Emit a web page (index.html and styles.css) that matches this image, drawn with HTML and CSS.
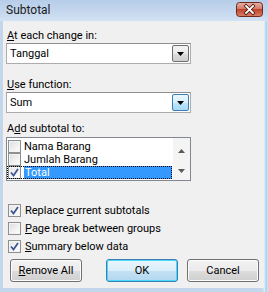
FILE: index.html
```html
<!DOCTYPE html>
<html>
<head>
<meta charset="utf-8">
<link rel="stylesheet" href="styles.css">
</head>
<body>
<div class="window">
  <div class="titlebar">
    <span class="title">Subtotal</span>
    <span class="close">
      <svg width="27" height="15" viewBox="0 0 27 15">
        <defs>
          <linearGradient id="cg" x1="0" y1="0" x2="0" y2="1">
            <stop offset="0" stop-color="#e9b4a8"/>
            <stop offset="0.45" stop-color="#d27a66"/>
            <stop offset="0.5" stop-color="#c1442c"/>
            <stop offset="1" stop-color="#d9826a"/>
          </linearGradient>
        </defs>
        <rect x="0.5" y="0.5" width="26" height="14" rx="3" fill="url(#cg)" stroke="#6e2a1c"/>
        <path d="M10 4 L17 11 M17 4 L10 11" stroke="#4a1a12" stroke-width="3.4" stroke-linecap="square"/>
        <path d="M10 4 L17 11 M17 4 L10 11" stroke="#ffffff" stroke-width="1.8" stroke-linecap="square"/>
      </svg>
    </span>
  </div>
  <div class="body">
    <div class="label l1"><u>A</u>t each change in:</div>
    <div class="combo">
      <span class="value">Tanggal</span>
      <span class="drop"><svg width="7" height="4" viewBox="0 0 7 4"><path d="M0 0 H7 L3.5 4 Z" fill="#000"/></svg></span>
    </div>
    <div class="label l2"><u>U</u>se function:</div>
    <div class="combo hot">
      <span class="value">Sum</span>
      <span class="drop"><svg width="7" height="4" viewBox="0 0 7 4"><path d="M0 0 H7 L3.5 4 Z" fill="#000"/></svg></span>
    </div>
    <div class="label l3">A<u>d</u>d subtotal to:</div>
    <div class="list">
      <div class="items">
        <div class="item"><span class="cb"></span><span class="txt">Nama Barang</span></div>
        <div class="item"><span class="cb"></span><span class="txt">Jumlah Barang</span></div>
        <div class="item sel"><span class="cb on"><svg width="9" height="9" viewBox="0 0 9 9"><path d="M1 4.5 L3.5 7.5 L8 1" fill="none" stroke="#3f5694" stroke-width="1.8"/></svg></span><span class="txt">Total</span></div>
      </div>
      <div class="scroll">
        <svg width="7" height="4" viewBox="0 0 7 4"><path d="M0 4 H7 L3.5 0 Z" fill="#5a5a5a"/></svg>
        <svg width="7" height="4" viewBox="0 0 7 4"><path d="M0 0 H7 L3.5 4 Z" fill="#5a5a5a"/></svg>
      </div>
    </div>
    <div class="checks">
      <div class="check"><span class="cb on"><svg width="9" height="9" viewBox="0 0 9 9"><path d="M1 4.5 L3.5 7.5 L8 1" fill="none" stroke="#3f5694" stroke-width="1.8"/></svg></span><span>Replace <u>c</u>urrent subtotals</span></div>
      <div class="check"><span class="cb"></span><span><u>P</u>age break between groups</span></div>
      <div class="check"><span class="cb on"><svg width="9" height="9" viewBox="0 0 9 9"><path d="M1 4.5 L3.5 7.5 L8 1" fill="none" stroke="#3f5694" stroke-width="1.8"/></svg></span><span><u>S</u>ummary below data</span></div>
    </div>
    <div class="buttons">
      <span class="btn remove"><u>R</u>emove All</span>
      <span class="btn ok">OK</span>
      <span class="btn cancel">Cancel</span>
    </div>
  </div>
</div>
</body>
</html>
```
FILE: styles.css
```css
html, body {
  margin: 0;
  padding: 0;
}
body {
  font-family: Roboto, "Noto Sans", sans-serif;
  font-size: 11px;
  color: #000;
}
u { text-decoration: underline; text-underline-offset: 1px; }
.window {
  width: 268px;
  height: 292px;
  display: flex;
  flex-direction: column;
  background: linear-gradient(90deg, #c3d6ec 0, #c3d6ec 262px, #d8e6f4 264px, #e4eef8 265px, #7fd0ef 266px, #cfe0f2 267px);
}
.titlebar {
  height: 21px;
  display: flex;
  align-items: center;
  justify-content: space-between;
  padding: 0 5px 0 6px;
  background: linear-gradient(180deg, #b6cde9 0%, #c6d8ee 60%, #d3e2f3 100%);
}
.title {
  font-size: 12px;
  color: #1b1b1b;
  line-height: 15px;
}
.close {
  display: flex;
  height: 15px;
  margin-top: -3px;
}
.body {
  flex: 1;
  margin: 0 4px 4px 3px;
  background: #f0f0f0;
  padding: 0 0 0 3px;
  display: flex;
  flex-direction: column;
}
.label {
  height: 15px;
  line-height: 15px;
  padding-left: 1px;
}
.l1 { margin-top: 7px; }
.l2 { margin-top: 13px; }
.l3 { margin-top: 8px; }
.combo {
  width: 185px;
  height: 21px;
  box-sizing: border-box;
  border: 1px solid #acacac;
  border-top-color: #8e8f8f;
  background: #fff;
  display: flex;
  align-items: stretch;
  justify-content: space-between;
}
.combo .value {
  line-height: 19px;
  padding-left: 3px;
}
.combo .drop {
  width: 17px;
  margin: 1px;
  box-sizing: border-box;
  border: 1px solid #707070;
  border-radius: 2px;
  background: linear-gradient(180deg, #f2f2f2 0%, #ebebeb 50%, #dddddd 51%, #cfcfcf 100%);
  display: flex;
  align-items: center;
  justify-content: center;
}
.combo.hot .drop {
  border-color: #3c7fb1;
  background: linear-gradient(180deg, #eaf6fd 0%, #d9f0fc 50%, #bee6fd 51%, #a7d9f5 100%);
}
.list {
  margin-top: 1px;
  width: 185px;
  height: 44px;
  box-sizing: border-box;
  border: 1px solid #828790;
  background: #fff;
  display: flex;
}
.items {
  flex: 1;
  padding-top: 2px;
}
.item {
  height: 13px;
  display: flex;
  align-items: center;
}
.item .txt {
  display: block;
  height: 13px;
  line-height: 13px;
}
.item .cb {
  margin-left: 1px;
  margin-right: 3px;
}
.item.sel {
  outline: 1px dotted #000;
  outline-offset: -1px;
  width: 165px;
}
.item.sel .txt {
  flex: 1;
  background: #3399ff;
  color: #fff;
  padding-left: 1px;
}
.scroll {
  width: 17px;
  background: #f4f4f4;
  display: flex;
  flex-direction: column;
  align-items: center;
  justify-content: space-between;
  padding: 11px 0 7px;
  box-sizing: border-box;
}
.cb {
  width: 13px;
  height: 13px;
  box-sizing: border-box;
  border: 1px solid #8e8f8f;
  background: linear-gradient(135deg, #dcdcdc 0%, #f2f2f2 60%, #ffffff 100%);
  box-shadow: inset 0 0 0 1px #f4f4f4;
  display: inline-flex;
  align-items: center;
  justify-content: center;
  flex: none;
}
.cb.on {
  background: linear-gradient(135deg, #e3e3e3 0%, #f6f6f6 60%, #ffffff 100%);
}
.checks {
  margin-top: 20px;
  display: flex;
  flex-direction: column;
}
.check {
  height: 18px;
  display: flex;
  align-items: center;
  padding-left: 2px;
}
.check .cb { margin-right: 4px; }
.buttons {
  margin-top: 4px;
  display: flex;
  padding-left: 4px;
}
.btn {
  width: 72px;
  height: 23px;
  box-sizing: border-box;
  border: 1px solid #707070;
  border-radius: 3px;
  background: linear-gradient(180deg, #f2f2f2 0%, #ebebeb 50%, #dddddd 51%, #cfcfcf 100%);
  box-shadow: inset 0 0 0 1px #fcfcfc;
  display: flex;
  align-items: center;
  justify-content: center;
}
.btn.ok {
  margin-left: 24px;
  border-color: #3c7fb1;
  box-shadow: inset 0 0 0 1px #48d8fb;
  background: linear-gradient(180deg, #eaf6fd 0%, #dbeef9 50%, #c4e1f4 51%, #b3d8f1 100%);
}
.btn.cancel { margin-left: 9px; }
```
